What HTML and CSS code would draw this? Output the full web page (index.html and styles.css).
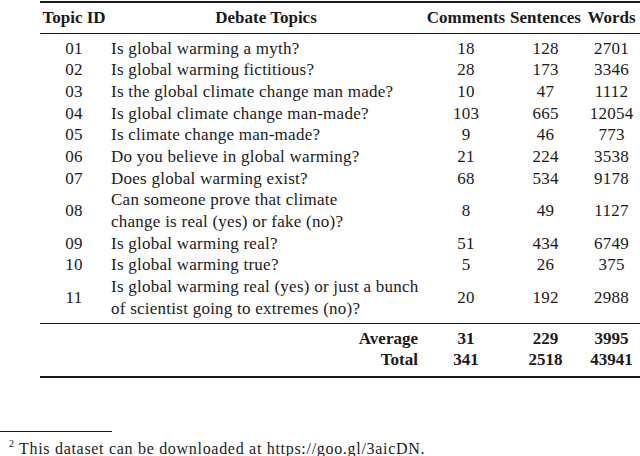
FILE: index.html
```html
<!DOCTYPE html>
<html>
<head>
<meta charset="utf-8">
<link rel="stylesheet" href="styles.css">
</head>
<body>
<table class="data">
  <colgroup>
    <col class="c-id"><col class="c-topic"><col class="c-num3"><col class="c-num4"><col class="c-num5">
  </colgroup>
  <thead>
    <tr>
      <th>Topic ID</th>
      <th>Debate Topics</th>
      <th>Comments</th>
      <th>Sentences</th>
      <th>Words</th>
    </tr>
  </thead>
  <tbody class="topics">
    <tr class="first"><td>01</td><td class="topic">Is global warming a myth?</td><td>18</td><td>128</td><td>2701</td></tr>
    <tr><td>02</td><td class="topic">Is global warming fictitious?</td><td>28</td><td>173</td><td>3346</td></tr>
    <tr><td>03</td><td class="topic">Is the global climate change man made?</td><td>10</td><td>47</td><td>1112</td></tr>
    <tr><td>04</td><td class="topic">Is global climate change man-made?</td><td>103</td><td>665</td><td>12054</td></tr>
    <tr><td>05</td><td class="topic">Is climate change man-made?</td><td>9</td><td>46</td><td>773</td></tr>
    <tr><td>06</td><td class="topic">Do you believe in global warming?</td><td>21</td><td>224</td><td>3538</td></tr>
    <tr><td>07</td><td class="topic">Does global warming exist?</td><td>68</td><td>534</td><td>9178</td></tr>
    <tr><td>08</td><td class="topic">Can someone prove that climate<br>change is real (yes) or fake (no)?</td><td>8</td><td>49</td><td>1127</td></tr>
    <tr><td>09</td><td class="topic">Is global warming real?</td><td>51</td><td>434</td><td>6749</td></tr>
    <tr><td>10</td><td class="topic">Is global warming true?</td><td>5</td><td>26</td><td>375</td></tr>
    <tr class="last"><td>11</td><td class="topic">Is global warming real (yes) or just a bunch<br>of scientist going to extremes (no)?</td><td>20</td><td>192</td><td>2988</td></tr>
  </tbody>
  <tbody class="summary">
    <tr class="first"><td colspan="2" class="label">Average</td><td>31</td><td>229</td><td>3995</td></tr>
    <tr class="last"><td colspan="2" class="label">Total</td><td>341</td><td>2518</td><td>43941</td></tr>
  </tbody>
</table>
<div class="footnote">
  <div class="fn-rule"></div>
  <p class="fn-text"><sup class="fn-mark">2</sup>This dataset can be downloaded at https://goo.gl/3aicDN.</p>
</div>
</body>
</html>
```
FILE: styles.css
```css
html, body {
  margin: 0;
  padding: 0;
  background: #ffffff;
}
body {
  width: 640px;
  height: 456px;
  overflow: hidden;
  font-family: "Liberation Serif", "Times New Roman", serif;
  color: #1a1a1a;
}
.data {
  margin: 1px 0 0 40px;
  width: 600px;
  table-layout: fixed;
  border-collapse: separate;
  border-spacing: 0;
  border-top: 2px solid #1a1a1a;
  border-bottom: 2px solid #1a1a1a;
  font-family: "Liberation Serif", "Times New Roman", serif;
  font-size: 17px;
  line-height: 21.67px;
}
.c-id { width: 68px; }
.c-topic { width: 316px; }
.c-num3 { width: 84px; }
.c-num4 { width: 75px; }
.c-num5 { width: 57px; }
.data th, .data td {
  padding: 0;
  text-align: center;
  vertical-align: middle;
  white-space: nowrap;
}
.data td {
  letter-spacing: 0.25px;
}
.data th {
  font-weight: bold;
  padding-top: 4px;
  padding-bottom: 4px;
  border-bottom: 1px solid #1a1a1a;
}
.data td.topic {
  text-align: left;
  padding-left: 3px;
}
.topics tr.first td { padding-top: 4px; }
.topics tr.last td {
  padding-bottom: 4px;
  border-bottom: 1px solid #1a1a1a;
}
.summary td {
  font-weight: bold;
  line-height: 21px;
  letter-spacing: 0;
}
.summary td.label {
  text-align: right;
  padding-right: 6px;
}
.summary tr.first td { padding-top: 3.5px; }
.summary tr.last td { padding-bottom: 6px; }
.footnote {
  margin-top: 53px;
}
.fn-rule {
  width: 112px;
  border-top: 1px solid #1a1a1a;
}
.fn-text {
  margin: 0;
  padding-top: 7px;
  padding-left: 9px;
  font-size: 16px;
  line-height: 20px;
  letter-spacing: 0.7px;
}
.fn-mark {
  font-size: 10px;
  vertical-align: 7px;
  line-height: 0;
  margin-right: 5px;
  letter-spacing: 0;
}
```
